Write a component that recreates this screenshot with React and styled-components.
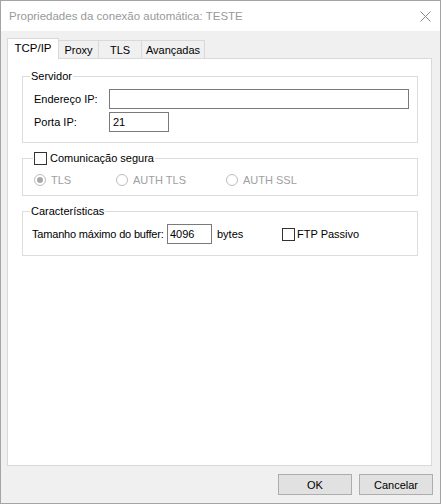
import React from 'react'
import styled, { createGlobalStyle } from 'styled-components'

const GlobalStyle = createGlobalStyle`
  html, body {
    margin: 0;
    padding: 0;
    background: #fff;
  }
  body {
    font-family: "Liberation Sans", Arial, sans-serif;
    font-size: 11px;
    color: #000;
  }
`

const Window = styled.div`
  width: 441px;
  height: 504px;
  box-sizing: border-box;
  border: 1px solid #a4a4a4;
  display: flex;
  flex-direction: column;
  background: #f0f0f0;
`

const TitleBar = styled.div`
  height: 30px;
  flex: none;
  background: #fff;
  display: flex;
  align-items: center;
  justify-content: space-between;
  padding: 0 9px 0 8px;
  color: #999;
  font-size: 11.5px;
`

const Body = styled.div`
  flex: 1;
  display: flex;
  flex-direction: column;
  padding: 7px 8px 8px 6px;
  min-height: 0;
`

const TabStrip = styled.div`
  height: 20px;
  flex: none;
  display: flex;
  align-items: flex-end;
  position: relative;
  z-index: 1;
`

const Tab = styled.div`
  box-sizing: border-box;
  width: ${p => p.$w}px;
  height: ${p => (p.$active ? 21 : 18)}px;
  margin-bottom: ${p => (p.$active ? -1 : 0)}px;
  margin-left: ${p => (p.$first ? 0 : -1)}px;
  padding-bottom: ${p => (p.$active ? 2 : 0)}px;
  border: 1px solid #d9d9d9;
  border-bottom: none;
  background: ${p => (p.$active ? '#fff' : '#f0f0f0')};
  position: relative;
  z-index: ${p => (p.$active ? 2 : 1)};
  display: flex;
  align-items: center;
  justify-content: center;
  white-space: nowrap;
  font-size: ${p => (p.$active ? 11.5 : 11)}px;
`

const Panel = styled.div`
  flex: 1;
  background: #fff;
  border: 1px solid #d9d9d9;
  padding: 10px 13px 0 14px;
  display: flex;
  flex-direction: column;
  gap: 8px;
`

const Group = styled.fieldset`
  margin: 0;
  min-width: 0;
  border: 1px solid #dcdcdc;
  padding: ${p => p.$pad};
`

const Legend = styled.legend`
  margin-left: ${p => p.$offset}px;
  padding: 0 1px;
  line-height: 15px;
  display: flex;
  align-items: center;
  white-space: nowrap;
`

const Row = styled.div`
  display: flex;
  align-items: center;
  height: 20px;
  padding-left: ${p => p.$indent}px;
  white-space: nowrap;
  & + & {
    margin-top: 3px;
  }
`

const Label = styled.span`
  width: ${p => p.$w}px;
  flex: none;
  margin-left: ${p => p.$left || 0}px;
  letter-spacing: ${p => (p.$tight ? '-0.18px' : 'normal')};
`

const TextBox = styled.input`
  box-sizing: border-box;
  width: ${p => p.$w}px;
  height: 20px;
  flex: none;
  margin: 0;
  border: 1px solid #7a7a7a;
  padding: 0 ${p => p.$pad}px;
  font: inherit;
  color: #000;
  background: #fff;
  outline: none;
`

const Check = styled.span`
  box-sizing: border-box;
  width: 13px;
  height: 13px;
  flex: none;
  border: 1px solid #333;
  background: #fff;
  margin-right: ${p => p.$gap}px;
`

const RadioRow = styled.div`
  display: flex;
  align-items: center;
  height: 16px;
  padding-left: 11px;
`

const RadioItem = styled.div`
  width: ${p => p.$w}px;
  flex: none;
  display: flex;
  align-items: center;
  color: #a0a0a0;
  white-space: nowrap;
`

const RadioDot = styled.span`
  box-sizing: border-box;
  width: 12px;
  height: 12px;
  flex: none;
  border-radius: 50%;
  border: 1px solid #bcbcbc;
  background: #fff;
  margin-right: 5px;
  display: flex;
  align-items: center;
  justify-content: center;

  &::after {
    content: '';
    width: 6px;
    height: 6px;
    border-radius: 50%;
    background: ${p => (p.$checked ? '#a8a8a8' : 'transparent')};
  }
`

const ButtonRow = styled.div`
  flex: none;
  display: flex;
  justify-content: flex-end;
  gap: 7px;
  margin-top: 8px;
  margin-right: -1px;
`

const Button = styled.button`
  box-sizing: border-box;
  width: 74px;
  height: 21px;
  margin: 0;
  padding: 0;
  border: 1px solid #adadad;
  background: #e1e1e1;
  font: inherit;
  color: #000;
`

const CloseIcon = () => (
  <svg width="11" height="11" viewBox="0 0 11 11">
    <path d="M0.5 0.5 L10.5 10.5 M10.5 0.5 L0.5 10.5" stroke="#8a8a8a" strokeWidth="1" fill="none" />
  </svg>
)

const App = () => {
  return (
    <>
      <GlobalStyle />
      <Window>
        <TitleBar>
          <span>Propriedades da conexão automática: TESTE</span>
          <CloseIcon />
        </TitleBar>
        <Body>
          <TabStrip>
            <Tab $w={52} $first $active>TCP/IP</Tab>
            <Tab $w={41}>Proxy</Tab>
            <Tab $w={44}>TLS</Tab>
            <Tab $w={64}>Avançadas</Tab>
          </TabStrip>
          <Panel>
            <Group $pad="5px 0 10px 0">
              <Legend $offset={7}>Servidor</Legend>
              <Row $indent={11}>
                <Label $w={75}>Endereço IP:</Label>
                <TextBox $w={300} $pad={3} defaultValue="" />
              </Row>
              <Row $indent={11}>
                <Label $w={75}>Porta IP:</Label>
                <TextBox $w={60} $pad={3} defaultValue="21" />
              </Row>
            </Group>

            <Group $pad="6px 0 7px 0">
              <Legend $offset={10}>
                <Check $gap={3} />
                Comunicação segura
              </Legend>
              <RadioRow>
                <RadioItem $w={82}><RadioDot $checked />TLS</RadioItem>
                <RadioItem $w={110}><RadioDot />AUTH TLS</RadioItem>
                <RadioItem $w={120}><RadioDot />AUTH SSL</RadioItem>
              </RadioRow>
            </Group>

            <Group $pad="5px 0 11px 0">
              <Legend $offset={7}>Características</Legend>
              <Row $indent={9}>
                <Label $w={135} $tight>Tamanho máximo do buffer:</Label>
                <TextBox $w={45} $pad={2} defaultValue="4096" />
                <Label $w={65} $left={5}>bytes</Label>
                <Check $gap={2} />
                <span>FTP Passivo</span>
              </Row>
            </Group>
          </Panel>
          <ButtonRow>
            <Button>OK</Button>
            <Button>Cancelar</Button>
          </ButtonRow>
        </Body>
      </Window>
    </>
  )
}

export default App
